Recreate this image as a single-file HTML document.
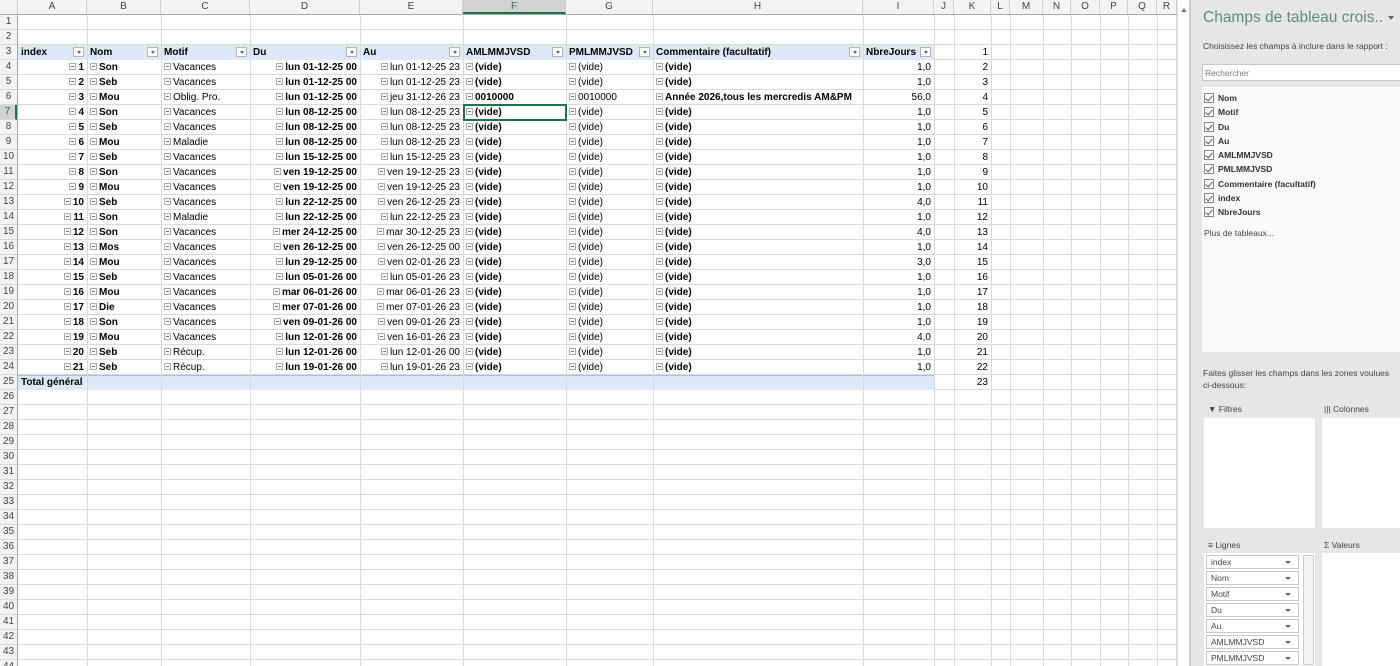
<!DOCTYPE html>
<html><head><meta charset="utf-8"><style>
*{margin:0;padding:0;box-sizing:border-box}
body{width:1400px;height:666px;overflow:hidden;background:#fff;position:relative;font-family:"Liberation Sans",sans-serif;font-size:10px;color:#000}
#grid{position:absolute;left:0;top:0;width:1177px;height:666px;background:repeating-linear-gradient(to bottom,transparent 0 14px,#dadada 14px 15px)}
.v{position:absolute;top:0;width:1px;height:666px;background:#dadada}
#ch{position:absolute;left:0;top:0;width:1177px;height:15px;background:#f3f3f3;border-bottom:1px solid #ababab;display:flex}
#ch span{flex:none;text-align:center;line-height:14px;color:#444;border-right:1px solid #d0d0d0;font-size:10px}
#rh{position:absolute;left:0;top:15px;width:18px;height:651px;background:#f3f3f3;border-right:1px solid #ababab;overflow:hidden}
#rh div{height:15px;line-height:14px;text-align:center;color:#444;font-size:10px;border-bottom:1px solid #d8d8d8}
.r{position:absolute;left:18px;height:15px;display:flex;line-height:15px;white-space:nowrap}
.r span{flex:none;overflow:hidden;padding:0 3px;position:relative}
.a{width:69px;text-align:right;font-weight:bold}.b{width:74px;font-weight:bold}.c{width:89px}.d{width:110px;text-align:right;font-weight:bold}
.e{width:103px;text-align:right}.f{width:103px;font-weight:bold}.g{width:87px}.h{width:210px;font-weight:bold}.i{width:71px;text-align:right}
.j{width:20px}.k{width:37px;text-align:right}
.m{display:inline-block;width:7px;height:7px;border:1px solid #aaa;position:relative;margin-right:2px}
.m:after{content:"";position:absolute;left:1px;right:1px;top:2px;height:1px;background:#777}
.hd{position:absolute;left:18px;top:45px;width:916px;height:15px;background:#dde9f6}
.tot{position:absolute;left:18px;top:375px;width:916px;height:15px;background:#dde9f6;border-top:1px solid #9dc3e6}
.dd{position:absolute;right:3px;top:2px;width:11px;height:10px;border:1px solid #b5b5b5;background:#fff}
.dd:after{content:"";position:absolute;left:3px;top:3px;border:2px solid transparent;border-top:3px solid #666}
#sel{position:absolute;left:463px;top:104px;width:104px;height:17px;border:2px solid #217346}
#sb{position:absolute;left:1177px;top:0;width:13px;height:666px;background:#fff;border-left:1px solid #ddd;border-right:1px solid #ccc}
#pane{position:absolute;left:1190px;top:0;width:210px;height:666px;background:#e6e6e6;border-left:1px solid #c8c8c8}
#pane .t{position:absolute;left:12px;top:9px;font-size:15.5px;color:#5a8f6e;white-space:nowrap}
.p{position:absolute;white-space:nowrap;font-size:8.5px;color:#444}
.box{position:absolute;background:#fafafa;border:1px solid #d4d4d4}
.cb{position:absolute;left:12px;width:10px;height:10px;border:1px solid #888;background:#fff}
.cb:after{content:"";position:absolute;left:2px;top:0px;width:3px;height:6px;border-right:1px solid #555;border-bottom:1px solid #555;transform:rotate(40deg)}
.fl{position:absolute;left:32px;font-weight:bold;font-size:8.5px;color:#333}
.fld{position:absolute;left:16px;width:93px;height:14px;border:1px solid #c8c8c8;background:#fff;font-size:8.5px;color:#444;padding-left:4px;line-height:12px}
.fld:after{content:"";position:absolute;right:7px;top:5px;border:3px solid transparent;border-top:3px solid #666}
</style></head><body>
<div id="grid"></div>
<div class="hd"></div><div class="tot"></div>
<div class="v" style="left:87px"></div><div class="v" style="left:161px"></div><div class="v" style="left:250px"></div><div class="v" style="left:360px"></div><div class="v" style="left:463px"></div><div class="v" style="left:566px"></div><div class="v" style="left:653px"></div><div class="v" style="left:863px"></div><div class="v" style="left:934px"></div><div class="v" style="left:954px"></div><div class="v" style="left:991px"></div><div class="v" style="left:1010px"></div><div class="v" style="left:1043px"></div><div class="v" style="left:1071px"></div><div class="v" style="left:1100px"></div><div class="v" style="left:1128px"></div><div class="v" style="left:1157px"></div><div class="v" style="left:1176px"></div>
<div id="ch"><span style="width:18px"></span><span style="width:69px">A</span><span style="width:74px">B</span><span style="width:89px">C</span><span style="width:110px">D</span><span style="width:103px">E</span><span style="width:103px;background:#d2d2d2;border-bottom:2px solid #217346;color:#217346">F</span><span style="width:87px">G</span><span style="width:210px">H</span><span style="width:71px">I</span><span style="width:20px">J</span><span style="width:37px">K</span><span style="width:19px">L</span><span style="width:33px">M</span><span style="width:28px">N</span><span style="width:29px">O</span><span style="width:28px">P</span><span style="width:29px">Q</span><span style="width:20px">R</span></div>
<div id="rh"><div>1</div><div>2</div><div>3</div><div>4</div><div>5</div><div>6</div><div style="background:#d2d2d2;color:#217346;border-right:2px solid #217346">7</div><div>8</div><div>9</div><div>10</div><div>11</div><div>12</div><div>13</div><div>14</div><div>15</div><div>16</div><div>17</div><div>18</div><div>19</div><div>20</div><div>21</div><div>22</div><div>23</div><div>24</div><div>25</div><div>26</div><div>27</div><div>28</div><div>29</div><div>30</div><div>31</div><div>32</div><div>33</div><div>34</div><div>35</div><div>36</div><div>37</div><div>38</div><div>39</div><div>40</div><div>41</div><div>42</div><div>43</div><div>44</div></div>

<div class="r" style="top:45px;font-weight:bold"><span style="width:69px">index<i class="dd"></i></span><span style="width:74px">Nom<i class="dd"></i></span><span style="width:89px">Motif<i class="dd"></i></span><span style="width:110px">Du<i class="dd"></i></span><span style="width:103px">Au<i class="dd"></i></span><span style="width:103px">AMLMMJVSD<i class="dd"></i></span><span style="width:87px">PMLMMJVSD<i class="dd"></i></span><span style="width:210px">Commentaire (facultatif)<i class="dd"></i></span><span style="width:71px">NbreJours<i class="dd"></i></span><span class="j"></span><span class="k" style="font-weight:normal">1</span></div>

<div class="r" style="top:60px"><span class="a"><i class="m"></i>1</span><span class="b"><i class="m"></i>Son</span><span class="c"><i class="m"></i>Vacances</span><span class="d"><i class="m"></i>lun 01-12-25 00</span><span class="e"><i class="m"></i>lun 01-12-25 23</span><span class="f"><i class="m"></i>(vide)</span><span class="g"><i class="m"></i>(vide)</span><span class="h"><i class="m"></i>(vide)</span><span class="i">1,0</span><span class="j"></span><span class="k">2</span></div>
<div class="r" style="top:75px"><span class="a"><i class="m"></i>2</span><span class="b"><i class="m"></i>Seb</span><span class="c"><i class="m"></i>Vacances</span><span class="d"><i class="m"></i>lun 01-12-25 00</span><span class="e"><i class="m"></i>lun 01-12-25 23</span><span class="f"><i class="m"></i>(vide)</span><span class="g"><i class="m"></i>(vide)</span><span class="h"><i class="m"></i>(vide)</span><span class="i">1,0</span><span class="j"></span><span class="k">3</span></div>
<div class="r" style="top:90px"><span class="a"><i class="m"></i>3</span><span class="b"><i class="m"></i>Mou</span><span class="c"><i class="m"></i>Oblig. Pro.</span><span class="d"><i class="m"></i>lun 01-12-25 00</span><span class="e"><i class="m"></i>jeu 31-12-26 23</span><span class="f"><i class="m"></i>0010000</span><span class="g"><i class="m"></i>0010000</span><span class="h"><i class="m"></i>Année 2026,tous les mercredis AM&amp;PM</span><span class="i">56,0</span><span class="j"></span><span class="k">4</span></div>
<div class="r" style="top:105px"><span class="a"><i class="m"></i>4</span><span class="b"><i class="m"></i>Son</span><span class="c"><i class="m"></i>Vacances</span><span class="d"><i class="m"></i>lun 08-12-25 00</span><span class="e"><i class="m"></i>lun 08-12-25 23</span><span class="f"><i class="m"></i>(vide)</span><span class="g"><i class="m"></i>(vide)</span><span class="h"><i class="m"></i>(vide)</span><span class="i">1,0</span><span class="j"></span><span class="k">5</span></div>
<div class="r" style="top:120px"><span class="a"><i class="m"></i>5</span><span class="b"><i class="m"></i>Seb</span><span class="c"><i class="m"></i>Vacances</span><span class="d"><i class="m"></i>lun 08-12-25 00</span><span class="e"><i class="m"></i>lun 08-12-25 23</span><span class="f"><i class="m"></i>(vide)</span><span class="g"><i class="m"></i>(vide)</span><span class="h"><i class="m"></i>(vide)</span><span class="i">1,0</span><span class="j"></span><span class="k">6</span></div>
<div class="r" style="top:135px"><span class="a"><i class="m"></i>6</span><span class="b"><i class="m"></i>Mou</span><span class="c"><i class="m"></i>Maladie</span><span class="d"><i class="m"></i>lun 08-12-25 00</span><span class="e"><i class="m"></i>lun 08-12-25 23</span><span class="f"><i class="m"></i>(vide)</span><span class="g"><i class="m"></i>(vide)</span><span class="h"><i class="m"></i>(vide)</span><span class="i">1,0</span><span class="j"></span><span class="k">7</span></div>
<div class="r" style="top:150px"><span class="a"><i class="m"></i>7</span><span class="b"><i class="m"></i>Seb</span><span class="c"><i class="m"></i>Vacances</span><span class="d"><i class="m"></i>lun 15-12-25 00</span><span class="e"><i class="m"></i>lun 15-12-25 23</span><span class="f"><i class="m"></i>(vide)</span><span class="g"><i class="m"></i>(vide)</span><span class="h"><i class="m"></i>(vide)</span><span class="i">1,0</span><span class="j"></span><span class="k">8</span></div>
<div class="r" style="top:165px"><span class="a"><i class="m"></i>8</span><span class="b"><i class="m"></i>Son</span><span class="c"><i class="m"></i>Vacances</span><span class="d"><i class="m"></i>ven 19-12-25 00</span><span class="e"><i class="m"></i>ven 19-12-25 23</span><span class="f"><i class="m"></i>(vide)</span><span class="g"><i class="m"></i>(vide)</span><span class="h"><i class="m"></i>(vide)</span><span class="i">1,0</span><span class="j"></span><span class="k">9</span></div>
<div class="r" style="top:180px"><span class="a"><i class="m"></i>9</span><span class="b"><i class="m"></i>Mou</span><span class="c"><i class="m"></i>Vacances</span><span class="d"><i class="m"></i>ven 19-12-25 00</span><span class="e"><i class="m"></i>ven 19-12-25 23</span><span class="f"><i class="m"></i>(vide)</span><span class="g"><i class="m"></i>(vide)</span><span class="h"><i class="m"></i>(vide)</span><span class="i">1,0</span><span class="j"></span><span class="k">10</span></div>
<div class="r" style="top:195px"><span class="a"><i class="m"></i>10</span><span class="b"><i class="m"></i>Seb</span><span class="c"><i class="m"></i>Vacances</span><span class="d"><i class="m"></i>lun 22-12-25 00</span><span class="e"><i class="m"></i>ven 26-12-25 23</span><span class="f"><i class="m"></i>(vide)</span><span class="g"><i class="m"></i>(vide)</span><span class="h"><i class="m"></i>(vide)</span><span class="i">4,0</span><span class="j"></span><span class="k">11</span></div>
<div class="r" style="top:210px"><span class="a"><i class="m"></i>11</span><span class="b"><i class="m"></i>Son</span><span class="c"><i class="m"></i>Maladie</span><span class="d"><i class="m"></i>lun 22-12-25 00</span><span class="e"><i class="m"></i>lun 22-12-25 23</span><span class="f"><i class="m"></i>(vide)</span><span class="g"><i class="m"></i>(vide)</span><span class="h"><i class="m"></i>(vide)</span><span class="i">1,0</span><span class="j"></span><span class="k">12</span></div>
<div class="r" style="top:225px"><span class="a"><i class="m"></i>12</span><span class="b"><i class="m"></i>Son</span><span class="c"><i class="m"></i>Vacances</span><span class="d"><i class="m"></i>mer 24-12-25 00</span><span class="e"><i class="m"></i>mar 30-12-25 23</span><span class="f"><i class="m"></i>(vide)</span><span class="g"><i class="m"></i>(vide)</span><span class="h"><i class="m"></i>(vide)</span><span class="i">4,0</span><span class="j"></span><span class="k">13</span></div>
<div class="r" style="top:240px"><span class="a"><i class="m"></i>13</span><span class="b"><i class="m"></i>Mos</span><span class="c"><i class="m"></i>Vacances</span><span class="d"><i class="m"></i>ven 26-12-25 00</span><span class="e"><i class="m"></i>ven 26-12-25 00</span><span class="f"><i class="m"></i>(vide)</span><span class="g"><i class="m"></i>(vide)</span><span class="h"><i class="m"></i>(vide)</span><span class="i">1,0</span><span class="j"></span><span class="k">14</span></div>
<div class="r" style="top:255px"><span class="a"><i class="m"></i>14</span><span class="b"><i class="m"></i>Mou</span><span class="c"><i class="m"></i>Vacances</span><span class="d"><i class="m"></i>lun 29-12-25 00</span><span class="e"><i class="m"></i>ven 02-01-26 23</span><span class="f"><i class="m"></i>(vide)</span><span class="g"><i class="m"></i>(vide)</span><span class="h"><i class="m"></i>(vide)</span><span class="i">3,0</span><span class="j"></span><span class="k">15</span></div>
<div class="r" style="top:270px"><span class="a"><i class="m"></i>15</span><span class="b"><i class="m"></i>Seb</span><span class="c"><i class="m"></i>Vacances</span><span class="d"><i class="m"></i>lun 05-01-26 00</span><span class="e"><i class="m"></i>lun 05-01-26 23</span><span class="f"><i class="m"></i>(vide)</span><span class="g"><i class="m"></i>(vide)</span><span class="h"><i class="m"></i>(vide)</span><span class="i">1,0</span><span class="j"></span><span class="k">16</span></div>
<div class="r" style="top:285px"><span class="a"><i class="m"></i>16</span><span class="b"><i class="m"></i>Mou</span><span class="c"><i class="m"></i>Vacances</span><span class="d"><i class="m"></i>mar 06-01-26 00</span><span class="e"><i class="m"></i>mar 06-01-26 23</span><span class="f"><i class="m"></i>(vide)</span><span class="g"><i class="m"></i>(vide)</span><span class="h"><i class="m"></i>(vide)</span><span class="i">1,0</span><span class="j"></span><span class="k">17</span></div>
<div class="r" style="top:300px"><span class="a"><i class="m"></i>17</span><span class="b"><i class="m"></i>Die</span><span class="c"><i class="m"></i>Vacances</span><span class="d"><i class="m"></i>mer 07-01-26 00</span><span class="e"><i class="m"></i>mer 07-01-26 23</span><span class="f"><i class="m"></i>(vide)</span><span class="g"><i class="m"></i>(vide)</span><span class="h"><i class="m"></i>(vide)</span><span class="i">1,0</span><span class="j"></span><span class="k">18</span></div>
<div class="r" style="top:315px"><span class="a"><i class="m"></i>18</span><span class="b"><i class="m"></i>Son</span><span class="c"><i class="m"></i>Vacances</span><span class="d"><i class="m"></i>ven 09-01-26 00</span><span class="e"><i class="m"></i>ven 09-01-26 23</span><span class="f"><i class="m"></i>(vide)</span><span class="g"><i class="m"></i>(vide)</span><span class="h"><i class="m"></i>(vide)</span><span class="i">1,0</span><span class="j"></span><span class="k">19</span></div>
<div class="r" style="top:330px"><span class="a"><i class="m"></i>19</span><span class="b"><i class="m"></i>Mou</span><span class="c"><i class="m"></i>Vacances</span><span class="d"><i class="m"></i>lun 12-01-26 00</span><span class="e"><i class="m"></i>ven 16-01-26 23</span><span class="f"><i class="m"></i>(vide)</span><span class="g"><i class="m"></i>(vide)</span><span class="h"><i class="m"></i>(vide)</span><span class="i">4,0</span><span class="j"></span><span class="k">20</span></div>
<div class="r" style="top:345px"><span class="a"><i class="m"></i>20</span><span class="b"><i class="m"></i>Seb</span><span class="c"><i class="m"></i>Récup.</span><span class="d"><i class="m"></i>lun 12-01-26 00</span><span class="e"><i class="m"></i>lun 12-01-26 00</span><span class="f"><i class="m"></i>(vide)</span><span class="g"><i class="m"></i>(vide)</span><span class="h"><i class="m"></i>(vide)</span><span class="i">1,0</span><span class="j"></span><span class="k">21</span></div>
<div class="r" style="top:360px"><span class="a"><i class="m"></i>21</span><span class="b"><i class="m"></i>Seb</span><span class="c"><i class="m"></i>Récup.</span><span class="d"><i class="m"></i>lun 19-01-26 00</span><span class="e"><i class="m"></i>lun 19-01-26 23</span><span class="f"><i class="m"></i>(vide)</span><span class="g"><i class="m"></i>(vide)</span><span class="h"><i class="m"></i>(vide)</span><span class="i">1,0</span><span class="j"></span><span class="k">22</span></div>
<div class="r" style="top:375px"><span style="width:200px;font-weight:bold">Total général</span><span style="width:716px"></span><span class="j"></span><span class="k">23</span></div>
<div id="sel"></div>

<div id="sb"><div style="position:absolute;left:3px;top:5px;border:3px solid transparent;border-bottom:4px solid #777"></div></div>

<div id="pane">
<div class="t">Champs de tableau crois..</div>
<div style="position:absolute;right:6px;top:16px;border:3px solid transparent;border-top:4px solid #666"></div>
<div class="p" style="left:12px;top:41px">Choisissez les champs à inclure dans le rapport :</div>
<div class="box" style="left:11px;top:64px;width:200px;height:17px;background:#fff;border-color:#c6c6c6"><span class="p" style="left:2px;top:3px;color:#777">Rechercher</span></div>
<div class="box" style="left:11px;top:87px;width:200px;height:265px;border:none">
<i class="cb" style="left:2px;top:6px"></i><span class="fl" style="left:16px;top:6px">Nom</span>
<i class="cb" style="left:2px;top:20px"></i><span class="fl" style="left:16px;top:20px">Motif</span>
<i class="cb" style="left:2px;top:35px"></i><span class="fl" style="left:16px;top:35px">Du</span>
<i class="cb" style="left:2px;top:49px"></i><span class="fl" style="left:16px;top:49px">Au</span>
<i class="cb" style="left:2px;top:63px"></i><span class="fl" style="left:16px;top:63px">AMLMMJVSD</span>
<i class="cb" style="left:2px;top:77px"></i><span class="fl" style="left:16px;top:77px">PMLMMJVSD</span>
<i class="cb" style="left:2px;top:92px"></i><span class="fl" style="left:16px;top:92px">Commentaire (facultatif)</span>
<i class="cb" style="left:2px;top:106px"></i><span class="fl" style="left:16px;top:106px">index</span>
<i class="cb" style="left:2px;top:120px"></i><span class="fl" style="left:16px;top:120px">NbreJours</span>
<span class="p" style="left:2px;top:141px">Plus de tableaux...</span>
</div>
<div class="p" style="left:12px;top:368px">Faites glisser les champs dans les zones voulues</div>
<div class="p" style="left:12px;top:380px">ci-dessous:</div>
<div class="p" style="left:17px;top:404px">▼ Filtres</div>
<div class="p" style="left:133px;top:404px">||| Colonnes</div>
<div class="box" style="left:13px;top:418px;width:111px;height:110px;border:none;background:#fff"></div>
<div class="box" style="left:131px;top:418px;width:79px;height:110px;border:none;background:#fff"></div>
<div class="p" style="left:17px;top:540px">≡ Lignes</div>
<div class="p" style="left:133px;top:540px">Σ Valeurs</div>
<div class="box" style="left:13px;top:553px;width:111px;height:113px;border:none;background:#fff">
<div class="fld" style="left:2px;top:2px">index</div>
<div class="fld" style="left:2px;top:18px">Nom</div>
<div class="fld" style="left:2px;top:34px">Motif</div>
<div class="fld" style="left:2px;top:50px">Du</div>
<div class="fld" style="left:2px;top:66px">Au</div>
<div class="fld" style="left:2px;top:82px">AMLMMJVSD</div>
<div class="fld" style="left:2px;top:98px">PMLMMJVSD</div>
<div style="position:absolute;left:99px;top:2px;width:11px;height:110px;border:1px solid #ccc;background:#f4f4f4"></div>
</div>
<div class="box" style="left:131px;top:553px;width:79px;height:113px;border:none;background:#fff"></div>
</div>
</body></html>
